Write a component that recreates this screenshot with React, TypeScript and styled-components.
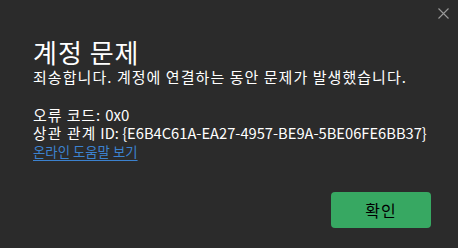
import styled, { createGlobalStyle } from "styled-components"

const GlobalStyle = createGlobalStyle`
    html, body {
        margin: 0;
        padding: 0;
        background: #2b2b2b;
    }
    body {
        font-family: "Noto Sans CJK KR", "Noto Sans", sans-serif;
        color: #ffffff;
    }
`

const Dialog = styled.div`
    position: relative;
    width: 458px;
    height: 248px;
    box-sizing: border-box;
    padding: 36px 27px 0 33px;
    background: #2b2b2b;
    display: flex;
    flex-direction: column;
`

const CloseButton = styled.button`
    position: absolute;
    top: 3px;
    right: 5px;
    width: 20px;
    height: 20px;
    padding: 0;
    border: none;
    background: transparent;
    display: flex;
    align-items: center;
    justify-content: center;
`

const Title = styled.h1`
    margin: 0;
    font-size: 26px;
    font-weight: 400;
    line-height: 32px;
    letter-spacing: 1px;
`

const Line = styled.p<{ $size?: number }>`
    margin: 0;
    display: flex;
    gap: 4px;
    font-size: ${({ $size }) => $size ?? 15}px;
    line-height: 18px;
`

const Hangul = styled.span<{ $spacing: number }>`
    letter-spacing: ${({ $spacing }) => $spacing}px;
`

const Spacer = styled.div`
    height: 20px;
`

const HelpLink = styled.a`
    font-size: 13.4px;
    line-height: 18px;
    color: #3c82cf;
    text-decoration: underline;
    text-underline-offset: 3px;
    align-self: flex-start;
`

const Footer = styled.div`
    display: flex;
    justify-content: flex-end;
    margin-top: auto;
    padding-bottom: 20px;
`

const PrimaryButton = styled.button`
    width: 100px;
    height: 36px;
    border: none;
    border-radius: 4px;
    background: #37a862;
    color: #000000;
    font-family: "Noto Sans CJK KR", sans-serif;
    font-size: 16px;
    letter-spacing: 1px;
`

export default function App() {
    return (
        <>
            <GlobalStyle />
            <Dialog>
                <CloseButton aria-label="닫기">
                    <svg width="11" height="11" viewBox="0 0 11 11">
                        <path d="M0.5 0.5 L10.5 10.5 M10.5 0.5 L0.5 10.5" stroke="#9a9a9a" strokeWidth="1.1" />
                    </svg>
                </CloseButton>
                <Title>계정 문제</Title>
                <Line><Hangul $spacing={1.05}>죄송합니다. 계정에 연결하는 동안 문제가 발생했습니다.</Hangul></Line>
                <Spacer />
                <Line><Hangul $spacing={0.9}>오류 코드:</Hangul><span>0x0</span></Line>
                <Line $size={14.7}><Hangul $spacing={1.2}>상관 관계</Hangul><span>ID: {"{E6B4C61A-EA27-4957-BE9A-5BE06FE6BB37}"}</span></Line>
                <HelpLink href="#">온라인 도움말 보기</HelpLink>
                <Footer>
                    <PrimaryButton>확인</PrimaryButton>
                </Footer>
            </Dialog>
        </>
    )
}
